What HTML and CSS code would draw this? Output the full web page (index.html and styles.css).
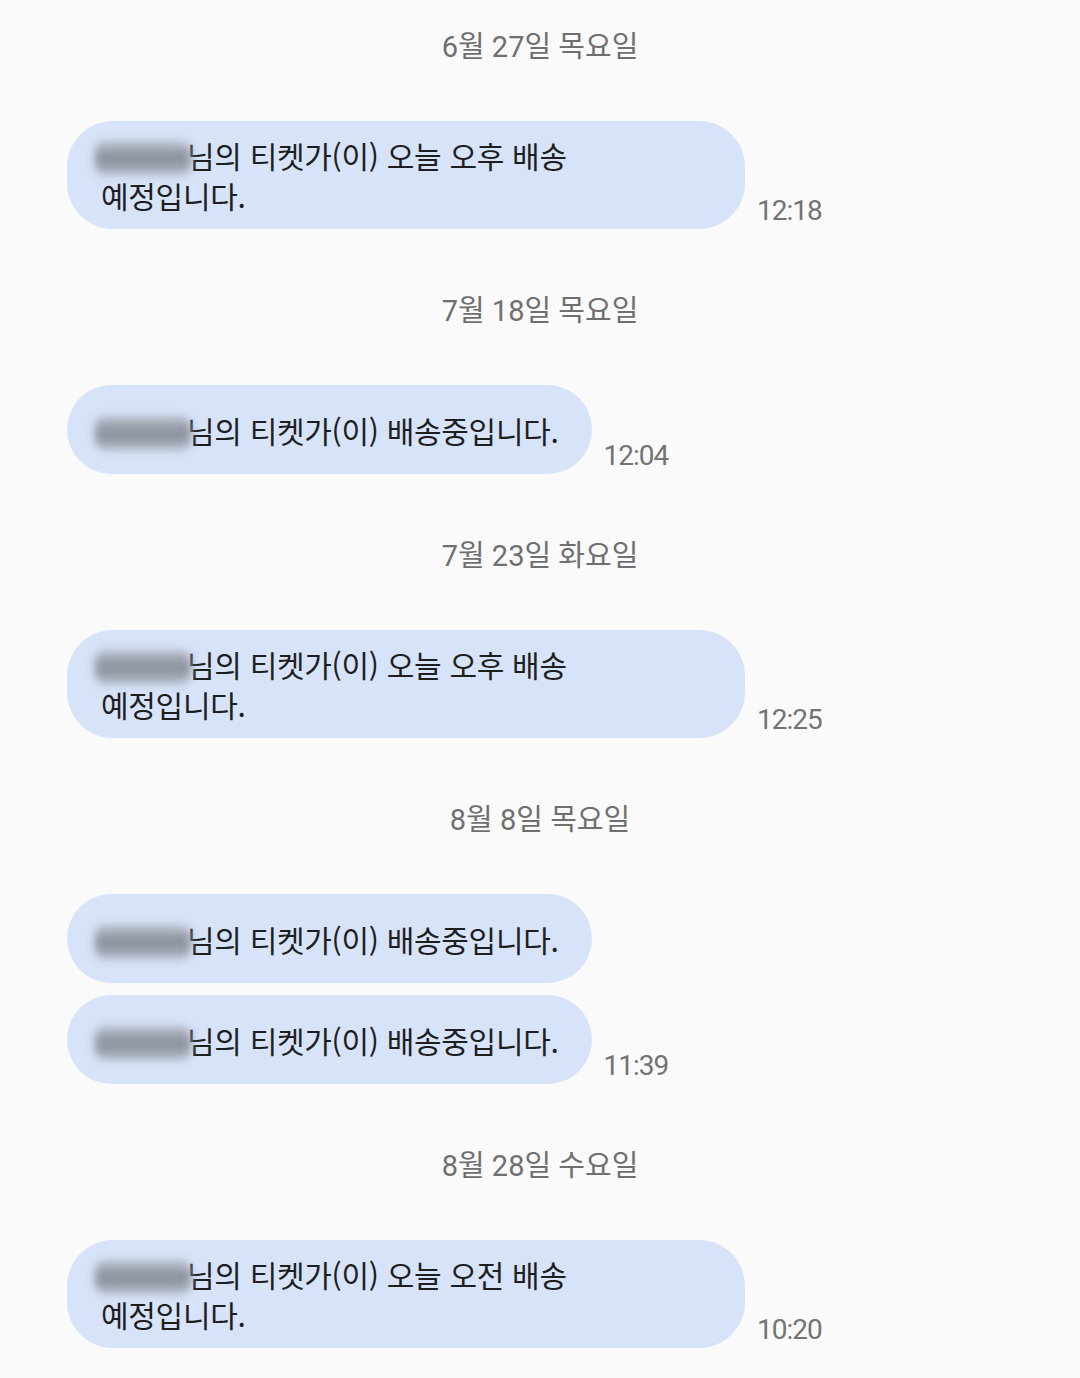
FILE: index.html
```html
<!DOCTYPE html>
<html lang="ko">
<head>
  <meta charset="UTF-8">
  <meta name="viewport" content="width=device-width, initial-scale=1.0">
  <title>알림 메시지</title>
  <link rel="stylesheet" href="styles.css">
</head>
<body>
  <main class="chat">
    <section class="day">
      <div class="day-label">6월 27일 목요일</div>
      <div class="row">
        <div class="bubble"><p class="msg"><span class="name" role="img" aria-label="이름 가림"></span>님의 티켓가(이) 오늘 오후 배송 예정입니다.</p></div>
        <span class="time">12:18</span>
      </div>
    </section>

    <section class="day">
      <div class="day-label">7월 18일 목요일</div>
      <div class="row">
        <div class="bubble"><p class="msg"><span class="name" role="img" aria-label="이름 가림"></span>님의 티켓가(이) 배송중입니다.</p></div>
        <span class="time">12:04</span>
      </div>
    </section>

    <section class="day">
      <div class="day-label">7월 23일 화요일</div>
      <div class="row">
        <div class="bubble"><p class="msg"><span class="name" role="img" aria-label="이름 가림"></span>님의 티켓가(이) 오늘 오후 배송 예정입니다.</p></div>
        <span class="time">12:25</span>
      </div>
    </section>

    <section class="day">
      <div class="day-label">8월 8일 목요일</div>
      <div class="row">
        <div class="bubble"><p class="msg"><span class="name" role="img" aria-label="이름 가림"></span>님의 티켓가(이) 배송중입니다.</p></div>
      </div>
      <div class="row">
        <div class="bubble"><p class="msg"><span class="name" role="img" aria-label="이름 가림"></span>님의 티켓가(이) 배송중입니다.</p></div>
        <span class="time">11:39</span>
      </div>
    </section>

    <section class="day">
      <div class="day-label">8월 28일 수요일</div>
      <div class="row">
        <div class="bubble"><p class="msg"><span class="name" role="img" aria-label="이름 가림"></span>님의 티켓가(이) 오늘 오전 배송 예정입니다.</p></div>
        <span class="time">10:20</span>
      </div>
    </section>
  </main>
</body>
</html>
```

FILE: styles.css
```css
body {
  margin: 0;
  background-color: #fafafa;
  font-family: "Noto Sans CJK KR", "Noto Sans", sans-serif;
  color: #1e1e1e;
}

.chat {
  padding: 27px 0 30px 67px;
}

.day {
  display: flex;
  flex-direction: column;
  gap: 12px;
  padding-top: 62px;
}

.day:first-child {
  padding-top: 0;
}

.day-label {
  margin: 0 0 42px -67px; /* center on the full page width */
  text-align: center;
  font-family: Roboto, "Noto Sans CJK KR", sans-serif;
  font-size: 29px;
  line-height: 40px;
  color: #6f6f6f;
}

.row {
  display: flex;
  align-items: flex-end;
  gap: 12px;
}

.bubble {
  box-sizing: border-box;
  max-width: 678px;
  min-height: 89px;
  padding: 14px 33px 14px 34px;
  display: flex;
  align-items: center;
  background-color: #d6e3f8;
  border-radius: 46px;
}

.msg {
  margin: 0;
  font-size: 30px;
  line-height: 40px;
  letter-spacing: -0.3px;
  word-break: keep-all;
}

/* blurred customer name */
.name {
  display: inline-block;
  width: 96px;
  height: 34px;
  margin: 0 -4px 0 -6px;
  vertical-align: -7px;
  background: linear-gradient(#bcc2ce, #878d99 50%, #b3b9c5);
  border-radius: 10px;
  filter: blur(4px);
}

.time {
  font-family: Roboto, "Noto Sans", sans-serif;
  font-size: 28px;
  line-height: 36px;
  letter-spacing: -1px;
  color: #737373;
  white-space: nowrap;
}
```
